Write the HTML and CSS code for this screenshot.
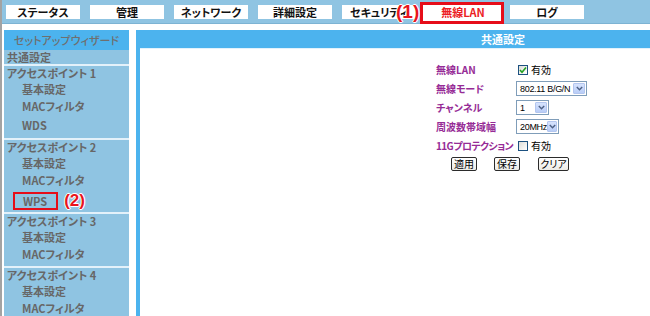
FILE: index.html
```html
<!DOCTYPE html>
<html lang="ja">
<head>
<meta charset="utf-8">
<title>無線LAN 共通設定</title>
<link rel="stylesheet" href="styles.css">
</head>
<body>
<div class="page">
  <div class="topbar">
    <div class="tab">ステータス</div>
    <div class="tab">管理</div>
    <div class="tab">ネットワーク</div>
    <div class="tab">詳細設定</div>
    <div class="tab">セキュリティ</div>
    <div class="tab active">無線LAN</div>
    <div class="tab">ログ</div>
  </div>
  <div class="note note1">(1)</div>
  <div class="main">
    <nav class="side">
      <div class="side-head">セットアップウィザード</div>
      <div class="side-top">共通設定</div>
      <div class="group">
        <div class="g-title">アクセスポイント 1</div>
        <div class="g-item">基本設定</div>
        <div class="g-item">MACフィルタ</div>
        <div class="g-item tall">WDS</div>
      </div>
      <div class="group">
        <div class="g-title">アクセスポイント 2</div>
        <div class="g-item">基本設定</div>
        <div class="g-item">MACフィルタ</div>
        <div class="g-item tall"><span class="mark">WPS</span><span class="note note2">(2)</span></div>
      </div>
      <div class="group">
        <div class="g-title">アクセスポイント 3</div>
        <div class="g-item">基本設定</div>
        <div class="g-item">MACフィルタ</div>
      </div>
      <div class="group">
        <div class="g-title">アクセスポイント 4</div>
        <div class="g-item">基本設定</div>
        <div class="g-item">MACフィルタ</div>
      </div>
    </nav>
    <section class="panel">
      <div class="panel-head">共通設定</div>
      <div class="panel-body">
        <div class="form">
          <div class="lbl">無線LAN</div>
          <div class="ctl"><span class="cb checked"><svg width="8" height="8" viewBox="0 0 8 8"><path d="M1 4 L3 6.2 L7 1.5" fill="none" stroke="#21a121" stroke-width="1.6"/></svg></span><span class="cbtext">有効</span></div>
          <div class="lbl">無線モード</div>
          <div class="ctl"><span class="sel w70"><span class="val">802.11 B/G/N</span><span class="arr"><svg width="7" height="5" viewBox="0 0 7 5"><path d="M0.8 1 L3.5 3.8 L6.2 1" fill="none" stroke="#4d6185" stroke-width="1.4"/></svg></span></span></div>
          <div class="lbl">チャンネル</div>
          <div class="ctl"><span class="sel w33"><span class="val">1</span><span class="arr"><svg width="7" height="5" viewBox="0 0 7 5"><path d="M0.8 1 L3.5 3.8 L6.2 1" fill="none" stroke="#4d6185" stroke-width="1.4"/></svg></span></span></div>
          <div class="lbl">周波数帯域幅</div>
          <div class="ctl"><span class="sel w43"><span class="val">20MHz</span><span class="arr"><svg width="7" height="5" viewBox="0 0 7 5"><path d="M0.8 1 L3.5 3.8 L6.2 1" fill="none" stroke="#4d6185" stroke-width="1.4"/></svg></span></span></div>
          <div class="lbl narrow">11Gプロテクション</div>
          <div class="ctl"><span class="cb"></span><span class="cbtext">有効</span></div>
        </div>
        <div class="buttons">
          <span class="btn b26">適用</span>
          <span class="btn b26">保存</span>
          <span class="btn b31">クリア</span>
        </div>
      </div>
    </section>
  </div>
</div>
</body>
</html>
```
FILE: styles.css
```css
html, body {
  margin: 0;
  padding: 0;
}
body {
  width: 650px;
  height: 316px;
  overflow: hidden;
  background: #fff;
  font-family: "Noto Sans CJK JP", "Noto Sans", sans-serif;
  font-feature-settings: "palt";
}
.page {
  position: relative;
  height: 316px;
  border-left: 2px solid #a3a3a3;
}
.topbar {
  box-sizing: border-box;
  height: 24px;
  background: #8fc4e2;
  border-bottom: 1px solid #7db3d3;
  display: flex;
  gap: 10px;
  padding: 5px 0 0 4px;
}
.tab {
  position: relative;
  z-index: 0;
  width: 74px;
  height: 14px;
  background: #fff;
  font-size: 11px;
  font-weight: bold;
  line-height: 14px;
  text-align: center;
  color: #111;
  white-space: nowrap;
  overflow: hidden;
}
.tab.active {
  overflow: visible;
  color: #ec1c24;
}
.tab.active::before {
  content: "";
  position: absolute;
  left: -6px;
  right: -4px;
  top: -3px;
  bottom: -5px;
  border: 3px solid #e60d19;
  background: #fff;
  z-index: -1;
}
.note {
  color: #e8141c;
  font-family: "Liberation Sans", "DejaVu Sans", sans-serif;
  font-weight: bold;
  text-shadow: 0 0 2px #fff, 1px 0 0 #fff, -1px 0 0 #fff, 0 1px 0 #fff, 0 -1px 0 #fff;
}
.note1 {
  position: absolute;
  left: 394px;
  top: 1px;
  font-size: 19px;
  line-height: 21px;
}
.main {
  display: flex;
  align-items: stretch;
  padding-top: 6px;
  height: 286px;
}
.side {
  flex: none;
  width: 125px;
  margin-left: 2px;
  background: #8fc4e2;
  color: #676767;
  font-size: 11px;
  font-weight: bold;
}
.side-head {
  height: 20px;
  line-height: 20px;
  background: #4cb3ee;
  color: #6f6f6f;
  font-weight: 500;
  text-align: center;
}
.side-top {
  height: 14px;
  line-height: 14px;
  padding-left: 3px;
}
.group {
  border-top: 2px solid #e3f1fa;
  padding-bottom: 3px;
}
.g-title {
  height: 15px;
  line-height: 15px;
  padding-left: 3px;
  white-space: nowrap;
}
.g-item {
  height: 17px;
  line-height: 17px;
  padding-left: 18px;
  white-space: nowrap;
}
.g-item.tall {
  height: 20px;
  line-height: 20px;
}
.mark {
  display: inline-block;
  line-height: 13px;
  margin-left: -9px;
  padding: 1px 9px 0 8px;
  border: 2px solid #e60d19;
  vertical-align: middle;
}
.note2 {
  font-size: 17px;
  margin-left: 6px;
  vertical-align: middle;
  line-height: 18px;
}
.panel {
  flex: none;
  width: 726px;
  margin-left: 7px;
  border-left: 4px solid #4cb3ee;
  background: #fff;
}
.panel-head {
  height: 18px;
  line-height: 18px;
  background: #4cb3ee;
  color: #fff;
  font-size: 11px;
  font-weight: bold;
  text-align: center;
  border-bottom: 1px solid #e2f2fc;
}
.panel-body {
  padding: 11px 0 0 296px;
}
.form {
  display: grid;
  grid-template-columns: 80px auto;
  grid-auto-rows: 19px;
  align-items: center;
}
.lbl {
  font-size: 10px;
  font-weight: bold;
  color: #962b96;
  white-space: nowrap;
}
.lbl.narrow {
  letter-spacing: -0.6px;
}
.ctl {
  display: flex;
  align-items: center;
  font-size: 10px;
  color: #000;
}
.cb {
  box-sizing: border-box;
  width: 10px;
  height: 10px;
  border: 1px solid #1c5180;
  background: linear-gradient(135deg, #dcdcd7, #fff);
  margin-left: 2px;
  display: flex;
  align-items: center;
  justify-content: center;
}
.cbtext {
  margin-left: 3px;
}
.sel {
  box-sizing: border-box;
  height: 15px;
  border: 1px solid #7f9db9;
  background: #fff;
  display: flex;
  align-items: center;
  justify-content: space-between;
  padding-left: 3px;
  padding-right: 1px;
}
.w70 { width: 71px; }
.w33 { width: 33px; }
.w43 { width: 43px; }
.val {
  font-family: "Liberation Sans", "DejaVu Sans", sans-serif;
  font-size: 9px;
  line-height: 12px;
  white-space: nowrap;
  letter-spacing: -0.3px;
}
.arr {
  box-sizing: border-box;
  width: 12px;
  height: 11px;
  background: linear-gradient(#d6e3fd, #b9cdf7);
  border: 1px solid #b3c6ef;
  border-radius: 1px;
  display: flex;
  align-items: center;
  justify-content: center;
}
.buttons {
  display: flex;
  margin-top: 2px;
  padding-left: 15px;
}
.btn {
  box-sizing: border-box;
  height: 14px;
  border: 1px solid #2b2b2b;
  border-radius: 2px;
  background: linear-gradient(#fff, #ecebe6);
  font-size: 10px;
  line-height: 12px;
  text-align: center;
  color: #000;
}
.b26 { width: 26px; }
.b31 { width: 31px; }
.b26 + .b26 { margin-left: 17px; }
.b26 + .b31 { margin-left: 18px; }
```
